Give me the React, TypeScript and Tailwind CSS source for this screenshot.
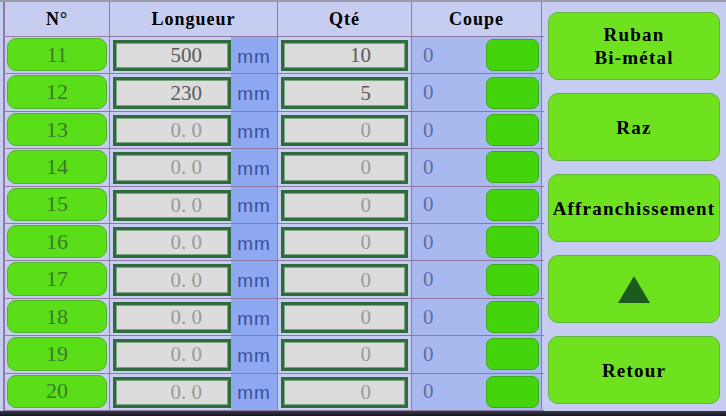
const rows = [
    { n: 11, len: '500', qty: '10', active: true },
    { n: 12, len: '230', qty: '5', active: true },
    { n: 13, len: '0. 0', qty: '0', active: false },
    { n: 14, len: '0. 0', qty: '0', active: false },
    { n: 15, len: '0. 0', qty: '0', active: false },
    { n: 16, len: '0. 0', qty: '0', active: false },
    { n: 17, len: '0. 0', qty: '0', active: false },
    { n: 18, len: '0. 0', qty: '0', active: false },
    { n: 19, len: '0. 0', qty: '0', active: false },
    { n: 20, len: '0. 0', qty: '0', active: false },
];

const serif = "font-['Liberation_Serif',serif]";
const line = 'border-[#8f7aa3]';

function ValueBox({ value, active, pr }: { value: string; active: boolean; pr: string }) {
    return (
        <div
            className={`flex h-full flex-1 items-center justify-end border-[3px] border-[#2f6b3c] bg-[#dcdcdc] text-[21px] leading-none shadow-[inset_0_0_0_1px_#7aa47f] ${pr} ${
                active ? 'text-[#5a5a5a]' : 'text-[#9a9a9a]'
            }`}
        >
            {value}
        </div>
    );
}

function SideButton({ children }: { children: React.ReactNode }) {
    return (
        <button
            className={`flex h-[68px] w-[172px] shrink-0 items-center justify-center rounded-[10px] border border-[#63b23a] bg-[#6ee21e] text-center text-[19px] font-bold leading-[23px] tracking-[1.2px] text-black ${serif}`}
        >
            {children}
        </button>
    );
}

export default function App() {
    return (
        <div className={`flex h-[416px] w-[726px] flex-col overflow-hidden bg-[#c6cdf0] ${serif}`}>
            <div className="flex min-h-0 flex-1 border-t-2 border-[#9a9aaa]">
                {/* table */}
                <div className={`ml-[3px] flex w-[541px] flex-col border-l-2 ${line}`}>
                    <div className={`grid h-[35px] shrink-0 grid-cols-[105px_168px_134px_130px] border-b ${line} text-[18px] font-bold leading-none tracking-[1px] text-black`}>
                        <div className={`flex items-center justify-center border-r ${line}`}>N°</div>
                        <div className={`flex items-center justify-center border-r ${line}`}>Longueur</div>
                        <div className={`flex items-center justify-center border-r ${line}`}>Qté</div>
                        <div className={`flex items-center justify-center border-r ${line}`}>Coupe</div>
                    </div>
                    {rows.map((r) => (
                        <div
                            key={r.n}
                            className={`grid min-h-0 flex-1 grid-cols-[105px_168px_134px_130px] border-b ${line}`}
                        >
                            <div className={`border-r ${line} px-[2px] pb-[2px] pt-[1px]`}>
                                <div className="flex h-full items-center justify-center rounded-[9px] border border-[#52b02a] bg-[#5ade18] text-[22px] leading-none text-[#3b7a2a]">
                                    {r.n}
                                </div>
                            </div>
                            <div className={`flex border-r ${line}`}>
                                <div className="flex flex-1 pb-[2px] pl-[3px] pt-[3px]">
                                    <ValueBox value={r.len} active={r.active} pr="pr-[26px]" />
                                </div>
                                <div className="flex w-[46px] items-center justify-center bg-[#8ea8f2] pt-[2px] font-['Liberation_Sans',sans-serif] text-[19px] leading-none tracking-[1px] text-[#3b4f9e]">
                                    mm
                                </div>
                            </div>
                            <div className={`flex border-r ${line} pb-[2px] pl-[3px] pr-[3px] pt-[3px]`}>
                                <ValueBox value={r.qty} active={r.active} pr="pr-[34px]" />
                            </div>
                            <div className={`flex items-center border-r ${line} bg-[#a8b9f0] pr-[2px]`}>
                                <span className="flex-1 pl-[11px] text-[21px] leading-none text-[#5b6da6]">0</span>
                                <div className="h-[32px] w-[53px] rounded-[7px] border border-[#3fa81a] bg-[#44d40c]" />
                            </div>
                        </div>
                    ))}
                </div>
                {/* side buttons */}
                <div className="flex flex-1 flex-col gap-[13px] pl-[4px] pt-[10px]">
                    <SideButton>
                        Ruban
                        <br />
                        Bi-métal
                    </SideButton>
                    <SideButton>Raz</SideButton>
                    <SideButton>Affranchissement</SideButton>
                    <SideButton>
                        <svg width="32" height="27" viewBox="0 0 32 27">
                            <polygon points="16,0 32,27 0,27" fill="#1d5a1d" />
                        </svg>
                    </SideButton>
                    <SideButton>Retour</SideButton>
                </div>
            </div>
            <div className="h-[5px] shrink-0 bg-gradient-to-b from-[#3a3a48] to-[#15151d]" />
        </div>
    );
}
